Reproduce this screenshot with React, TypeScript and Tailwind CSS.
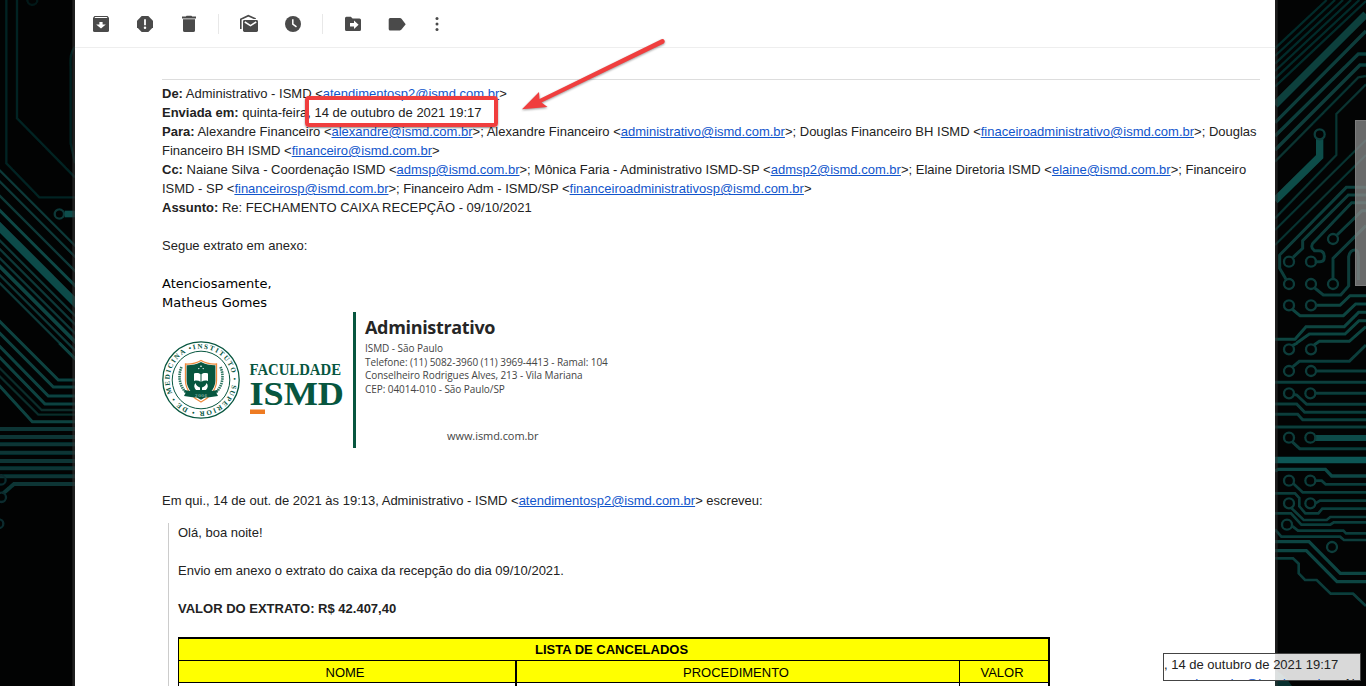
import React from "react";

const L = ({ children }: { children: React.ReactNode }) => (
  <a className="text-[#1155cc] underline">{children}</a>
);

const Row = ({ children, className = "" }: { children?: React.ReactNode; className?: string }) => (
  <div className={"h-[19px] whitespace-nowrap leading-[19px] " + className}>{children}</div>
);

function Icon({ children, narrow }: { children: React.ReactNode; narrow?: boolean }) {
  return (
    <button className={(narrow ? "w-9" : "w-11") + " flex shrink-0 items-center justify-center"}>
      <svg width="20" height="20" viewBox="0 0 20 20" fill="#4a4a4a">
        {children}
      </svg>
    </button>
  );
}

function Toolbar() {
  return (
    <div className="flex h-12 shrink-0 items-center border-b border-[#eeeeee] pl-1 pt-px">
      <Icon>
        <path d="M3.5 2h13L18 3.800V16.400a1.600 1.600 0 0 1-1.600 1.600H3.600A1.600 1.600 0 0 1 2 16.400V3.800z" />
        <path fill="#fff" d="M4.200 3.100h11.600l.7.9h-13zM8.400 8h3.200v2.400h3.200L10 14.600 5.200 10.400h3.200z" />
      </Icon>
      <Icon>
        <path d="M6.700 2h6.600L18 6.700v6.600L13.300 18H6.700L2 13.300V6.700z" />
        <path fill="#fff" d="M9.100 5.300h1.800v5.900H9.100z" />
        <circle cx="10" cy="13.700" r="1.250" fill="#fff" />
      </Icon>
      <Icon>
        <path d="M7.600 1.700h4.800l.8.900H17v1.900H3V2.600h3.800zM4 5.200h12v11.200a1.700 1.700 0 0 1-1.700 1.700H5.700A1.700 1.700 0 0 1 4 16.400z" />
      </Icon>
      <div className="ml-[7px] mr-[8px] h-5 w-px shrink-0 bg-[#e8e8e8]" />
      <Icon>
        <path d="M1.800 15V5.300L9.300 1.700l7.400 3.200" fill="none" stroke="#4a4a4a" strokeWidth="1.600" />
        <rect x="3" y="5" width="17" height="14" rx="2" fill="#fff" />
        <rect x="4" y="6" width="15" height="12" rx="1.400" />
        <path d="M5.800 8l5.700 3.600L17.200 8" fill="none" stroke="#fff" strokeWidth="1.500" />
      </Icon>
      <Icon>
        <circle cx="10" cy="10" r="8" />
        <path d="M9.800 5.300V10.200l3.700 2.700" fill="none" stroke="#fff" strokeWidth="1.500" />
      </Icon>
      <div className="ml-[7px] mr-[8px] h-5 w-px shrink-0 bg-[#e8e8e8]" />
      <Icon>
        <path d="M3.400 2.700h4.400L9.600 4.500h6.900A1.500 1.500 0 0 1 18 6v9.500a1.500 1.500 0 0 1-1.500 1.500h-13A1.500 1.500 0 0 1 2 15.500V4.200a1.500 1.500 0 0 1 1.400-1.500z" />
        <path fill="#fff" d="M7 9h4V6.500l4.600 4.300L11 15v-2.500H7z" />
      </Icon>
      <Icon>
        <path d="M3.200 4h9.600a2 2 0 0 1 1.700.8l4.200 5.400-4.200 5.400a2 2 0 0 1-1.700.8H3.200a1.500 1.500 0 0 1-1.500-1.500V5.500A1.500 1.500 0 0 1 3.200 4z" />
      </Icon>
      <Icon narrow>
        <circle cx="10" cy="4.400" r="1.500" />
        <circle cx="10" cy="10" r="1.500" />
        <circle cx="10" cy="15.600" r="1.500" />
      </Icon>
    </div>
  );
}

function LeftCircuit() {
  return (
    <svg className="h-[686px] w-[75px] shrink-0" viewBox="0 0 225 2058" fill="none">
      <defs>
        <filter id="softL" x="0" y="0" width="225" height="2058" filterUnits="userSpaceOnUse">
          <feGaussianBlur stdDeviation="2.200" />
        </filter>
      </defs>
      <rect width="225" height="2058" fill="#020303" />
      <g filter="url(#softL)">
        <g stroke="#0a3837" strokeWidth="7">
          <path strokeOpacity=".6" d="M19 0V490L118 592H225M51 0V355L225 532M225 140C208 160 212 180 212 220V430L225 490" />
          <circle cx="97" cy="0" r="15" strokeOpacity=".4" />
          <circle cx="178" cy="642" r="14" />
          <path stroke="#0c4e4b" strokeWidth="20" d="M194 642H235" />
          <path d="M-10 502L235 747M-10 535L235 780M-10 578L235 823" />
          <path strokeWidth="9" stroke="#0b4644" d="M-10 622L235 867" />
          <path strokeWidth="24" stroke="#0b4c4a" d="M-10 672L235 917" />
          <path d="M-10 712L235 957M-10 738L235 983M-10 765L235 1010" />
          <path strokeWidth="11" stroke="#0b4442" d="M-10 790L235 1035" />
          <path d="M-10 816L235 1061M-10 840L235 1085" />
          <path stroke="#0b4341" strokeWidth="9" d="M-10 955L175 1140H235M-10 990L160 1161H235M-10 1030L145 1188H235M-10 1063L135 1212H235M-10 1148L97 1265H235M178 1029L235 1086" />
          <path d="M-10 1095L125 1230H235M-10 1120L115 1244H235" strokeOpacity=".75" />
        </g>
        <g stroke="#083635" strokeWidth="12">
          <path d="M-10 1287H235M-10 1311H235M-10 1333H235M-10 1358H235M-10 1383H235M-10 1405H235M-10 1429H235M10 1480L42 1452H235" />
        </g>
        <g stroke="#082c2d" strokeWidth="7">
          <circle cx="3" cy="1440" r="14" />
          <circle cx="4" cy="1492" r="14" />
          <circle cx="-3" cy="1571" r="13" />
        </g>
      </g>
      <rect x="217" width="8" height="2058" fill="#333" fillOpacity=".6" />
    </svg>
  );
}

const pads = [
  [149, 403], [189, 717], [57, 785], [123, 785], [57, 852], [123, 852], [189, 852], [57, 916], [123, 916],
  [57, 1048], [123, 1048], [57, 1113], [123, 1113], [57, 1180], [121, 1180], [57, 1313], [121, 1313],
  [57, 1442], [121, 1442], [57, 1510], [121, 1510], [51, 1574], [186, 1641],
];

function RightCircuit() {
  return (
    <svg className="h-[686px] w-[91px] shrink-0" viewBox="15 0 273 2058" fill="none">
      <defs>
        <filter id="softR" x="15" y="0" width="273" height="2058" filterUnits="userSpaceOnUse">
          <feGaussianBlur stdDeviation="1.800" />
        </filter>
      </defs>
      <rect x="15" width="273" height="2058" fill="#030404" />
      <g stroke="#093d3b" strokeWidth="7" filter="url(#softR)">
        <g strokeOpacity=".7">
          <path d="M15 145L170 0M15 168L195 0M15 191L219 0M15 213L243 0M15 236L268 0M15 260L288 3" />
        </g>
        <path strokeWidth="22" stroke="#0a403e" d="M15 315L150 180L288 42" />
        <path strokeWidth="10" d="M15 368L288 93M15 408L265 162H288M15 450L270 195H288" />
        <path strokeWidth="7" strokeOpacity=".8" d="M15 485L265 232L288 228M15 655L199 465V342L288 253" />
        <path strokeWidth="22" stroke="#0b4d4a" d="M149 416V470L15 602" />
        <path d="M15 690L288 420M15 735L288 465" strokeOpacity=".8" />
        <path strokeWidth="9" d="M69 772L98 745V722L235 585H288M48 838L29 805V765L229 562H288M134 785H150Q163 785 163 770Q163 752 147 752H133Q117 739 133 725L245 608H288M201 705L276 632H288M189 837V775L288 677M134 864L160 885H212L236 858V770Q240 750 255 750Q265 750 265 770V840" />
        <path strokeWidth="9" stroke="#0a4441" d="M67 928L90 947H220L257 912H288M137 916H210L240 887H288M15 1018H75L108 980H223L266 937H288M80 1029L118 1002H225L267 962H288M132 1035L148 1024H238L288 980M67 1037L82 1029" />
        <path strokeWidth="9" d="M66 1102L88 1084H238L288 1035M137 1113H288M15 1147H288M137 1180H288M68 1182L80 1185L110 1213H288M15 1212H80L104 1237H288M15 1243H83L98 1259H288M15 1281H288M66 1325L89 1346H288" />
        <path strokeWidth="18" stroke="#0a4b49" d="M135 1314H298" />
        <path strokeWidth="20" stroke="#0a5755" d="M5 1380H298" />
        <path strokeWidth="10" stroke="#0a4644" d="M15 1413L24 1408H166L185 1428H288" />
        <path strokeWidth="8" d="M69 1450L98 1477H288M135 1442H155L167 1453H288M15 1480H75L88 1494V1519L106 1540H145L157 1526H288M135 1511L150 1502H288M64 1524L101 1560H170L181 1551H288M15 1540H63L94 1574H181L191 1567H288M65 1577L84 1592H220L228 1600H288M15 1588L34 1610H210L222 1620H288" />
        <path strokeWidth="10" stroke="#0a4442" d="M15 1625H117L211 1720H288M15 1652H109L201 1745H288" />
        <path strokeWidth="8" d="M15 1675H69L86 1691V1720L105 1740H140L182 1781H249L288 1818" />
        {pads.map(([x, y], i) => (
          <circle key={i} cx={x} cy={y} r="15" strokeWidth="7" stroke="#0a3c3a" />
        ))}
      </g>
      <path d="M15 2010Q45 2025 66 2058H15z" fill="#082f2e" />
      <rect x="15" width="8" height="2058" fill="#333" fillOpacity=".55" />
    </svg>
  );
}

function Crest() {
  return (
    <svg className="h-[136px] w-[190px] shrink-0" viewBox="162 312 190 136">
      <defs>
        <path id="ring" d="M201 348.600a31.400 31.400 0 1 1-.01 0" />
      </defs>
      <g fill="none" stroke="#07563f">
        <circle cx="201" cy="380" r="38.200" strokeWidth="1.300" />
        <circle cx="201" cy="380" r="28.800" strokeWidth="1" />
      </g>
      <g transform="rotate(-14 201 380)">
        <text fontSize="7" fontWeight="700" fill="#07563f" className="font-['Liberation_Serif',serif]">
          <textPath href="#ring" textLength="195">
            INSTITUTO • SUPERIOR • DE • MEDICINA •
          </textPath>
        </text>
      </g>
      <g fill="none" stroke="#2c7560" strokeWidth="2.600" strokeDasharray="1.500 .8">
        <path d="M181.500 367c-3.500 8-2.500 18 4 25" />
        <path d="M220.500 367c3.500 8 2.500 18-4 25" />
      </g>
      <path d="M201 360.500c4.500 2.800 10 3.700 15.500 3.500v16.500c0 10-8 17.500-15.500 21.500-7.500-4-15.500-11.500-15.500-21.500V364c5.500.2 11-.7 15.500-3.500z" fill="#fff" stroke="#ee8a3c" strokeWidth="1.300" />
      <path d="M201 362c4.500 2.500 9.500 3.300 14.400 3.200v15.500c0 8.500-7.400 15.300-14.400 19-7-3.700-14.400-10.500-14.400-19v-15.500c4.900.1 9.900-.7 14.400-3.200z" fill="#07563f" />
      <path d="M184 390q17 3.500 34 0l-1.500 3 1.500 3q-17 3.500-34 0l1.500-3z" fill="#07563f" />
      <g fill="#fff">
        <path d="M194 373.500c3-.8 5-.6 6.500.8v7.500c-2-1.300-4-1.500-6.500-.8zM208 373.500c-3-.8-5-.6-6.500.8v7.500c2-1.300 4-1.500 6.500-.8z" />
        <path d="M195.500 383c.5 2.500 2 3.500 4.500 4.500v2.500h-4c-2-2-2.500-5-.5-7zM206.500 383c-.5 2.500-2 3.500-4.500 4.500v2.500h4c2-2 2.500-5 .5-7z" />
        <circle cx="201" cy="366.300" r=".8" />
        <circle cx="198.800" cy="368.600" r=".7" />
        <circle cx="203.200" cy="368.600" r=".7" />
      </g>
      <text x="195" y="396.500" fontSize="5" fill="#bcd4cb" textLength="12" className="font-['Liberation_Serif',serif]">2006</text>
      <g fill="#07563f" fontWeight="700" className="font-['Liberation_Serif',serif]">
        <text x="249.500" y="374.500" fontSize="16" textLength="91.500" lengthAdjust="spacingAndGlyphs">FACULDADE</text>
        <text x="249.500" y="405" fontSize="34" textLength="94.500" lengthAdjust="spacingAndGlyphs">ISMD</text>
      </g>
      <rect x="250" y="409.500" width="15" height="4.500" fill="#ee7b22" />
    </svg>
  );
}

function Signature() {
  return (
    <div className="flex h-[136px] font-['Open_Sans',sans-serif] text-[#444]">
      <Crest />
      <div className="ml-px w-[3px] shrink-0 bg-[#07563f]" />
      <div className="flex flex-col whitespace-nowrap pl-[9px]">
        <div className="mt-[3px] h-6 text-[18px] font-bold leading-6 tracking-[-0.330px] text-[#262626]">Administrativo</div>
        <div className="mt-[3px] text-[10px] leading-[13.600px] tracking-[-0.060px]">
          <div>ISMD - São Paulo</div>
          <div>Telefone: (11) 5082-3960 (11) 3969-4413 - Ramal: 104</div>
          <div>Conselheiro Rodrigues Alves, 213 - Vila Mariana</div>
          <div>CEP: 04014-010 - São Paulo/SP</div>
        </div>
        <div className="mt-[32px] pl-[82px] text-[11px] leading-4 tracking-[-0.070px]">www.ismd.com.br</div>
      </div>
    </div>
  );
}

function Cancelled() {
  return (
    <div className="mt-[19px] w-[872px] border-2 border-l border-b-0 border-black text-center text-black">
      <div className="h-[22px] border-b border-black bg-[#ffff00] pr-1 font-bold leading-[22px]">LISTA DE CANCELADOS</div>
      <div className="flex h-[22px] border-b border-black bg-[#ffff00] leading-[23px]">
        <div className="w-[338px] border-r-2 border-black pr-1">NOME</div>
        <div className="w-[443px] border-r border-black pr-1">PROCEDIMENTO</div>
        <div className="flex-1 pr-1">VALOR</div>
      </div>
      <div className="flex h-[22px] bg-white">
        <div className="w-[338px] border-r-2 border-black" />
        <div className="w-[443px] border-r border-black" />
      </div>
    </div>
  );
}

export default function App() {
  return (
    <div className="relative flex h-[686px] w-[1366px] overflow-hidden bg-black font-['Liberation_Sans',Arial,sans-serif] text-[13px] text-[#222]">
      <LeftCircuit />
      <main className="flex h-[686px] w-[1200px] shrink-0 flex-col overflow-hidden bg-white">
        <Toolbar />
        <div className="ml-[87px] mt-[31px] w-[1098px] shrink-0 border-t border-[#dddddd] pt-1">
          <Row><b>De:</b> Administrativo - ISMD &lt;<L>atendimentosp2@ismd.com.br</L>&gt;</Row>
          <Row><b>Enviada em:</b> quinta-feira, 14 de outubro de 2021 19:17</Row>
          <Row><b>Para:</b> Alexandre Financeiro &lt;<L>alexandre@ismd.com.br</L>&gt;; Alexandre Financeiro &lt;<L>administrativo@ismd.com.br</L>&gt;; Douglas Financeiro BH ISMD &lt;<L>finaceiroadministrativo@ismd.com.br</L>&gt;; Douglas</Row>
          <Row>Financeiro BH ISMD &lt;<L>financeiro@ismd.com.br</L>&gt;</Row>
          <Row><b>Cc:</b> Naiane Silva - Coordenação ISMD &lt;<L>admsp@ismd.com.br</L>&gt;; Mônica Faria - Administrativo ISMD-SP &lt;<L>admsp2@ismd.com.br</L>&gt;; Elaine Diretoria ISMD &lt;<L>elaine@ismd.com.br</L>&gt;; Financeiro</Row>
          <Row>ISMD - SP &lt;<L>financeirosp@ismd.com.br</L>&gt;; Financeiro Adm - ISMD/SP &lt;<L>financeiroadministrativosp@ismd.com.br</L>&gt;</Row>
          <Row><b>Assunto:</b> Re: FECHAMENTO CAIXA RECEPÇÃO - 09/10/2021</Row>
          <Row />
          <Row>Segue extrato em anexo:</Row>
          <Row />
          <Row className="font-['DejaVu_Sans',sans-serif] text-black">Atenciosamente,</Row>
          <Row className="font-['DejaVu_Sans',sans-serif] text-black">Matheus Gomes</Row>
          <Signature />
          <Row className="mt-[43px]">Em qui., 14 de out. de 2021 às 19:13, Administrativo - ISMD &lt;<L>atendimentosp2@ismd.com.br</L>&gt; escreveu:</Row>
          <div className="ml-[6px] mt-[13px] border-l border-[#cccccc] pl-[9px]">
            <Row>Olá, boa noite!</Row>
            <Row />
            <Row>Envio em anexo o extrato do caixa da recepção do dia 09/10/2021.</Row>
            <Row />
            <Row><b>VALOR DO EXTRATO: R$ 42.407,40</b></Row>
            <Cancelled />
          </div>
        </div>
      </main>
      <RightCircuit />

      <div className="absolute left-[305px] top-[96px] h-[31px] w-[193px] rounded-[4px] border-4 border-[#f03e3e] shadow-[0_1px_2px_rgba(0,0,0,0.45)]" />
      <svg className="absolute left-[514px] top-[34px] drop-shadow-[0_1px_1px_rgba(0,0,0,0.4)]" width="155" height="84" viewBox="515 34 155 84">
        <path d="M662.500 39.200a2.400 2.400 0 0 1 2.200 4.200L542.500 102.500l6 4.500-25.500 2.300L540 92l.5 7z" fill="#f03e3e" />
      </svg>
      <div className="absolute left-[1355px] top-[120px] h-[166px] w-[11px] border border-r-0 border-[#7c7c7c] bg-[#8c8c8c]/75" />
      <div className="absolute left-[1163px] top-[653px] h-[28px] w-[198px] overflow-hidden border border-[#444] bg-white/85 pt-px">
        <Row>, 14 de outubro de 2021 19:17</Row>
        <Row className="pl-[24px]"><L>alexandre@ismd.com.br</L>&gt;; Alexandre</Row>
      </div>
    </div>
  );
}
